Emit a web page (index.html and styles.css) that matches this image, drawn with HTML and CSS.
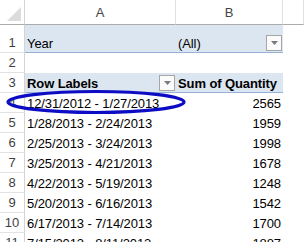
FILE: index.html
```html
<!DOCTYPE html>
<html>
<head>
<meta charset="utf-8">
<link rel="stylesheet" href="styles.css">
</head>
<body>
<div class="sheet">
  <div class="corner"><svg class="tri" width="16" height="16" viewBox="0 0 16 16"><polygon points="15,1 15,15 1,15" fill="#dcdcdc"/></svg></div>
  <div class="colhead">A</div>
  <div class="colhead">B</div>
  <div class="colhead"></div>

  <div class="rowhead">1</div>
  <div class="cell band">Year</div>
  <div class="cell band split">(All)<span class="dd"><svg width="7" height="4" viewBox="0 0 7 4"><polygon points="0,0 7,0 3.5,4" fill="#7a7a7a"/></svg></span></div>
  <div class="cell"></div>

  <div class="rowhead">2</div>
  <div class="cell"></div>
  <div class="cell"></div>
  <div class="cell"></div>

  <div class="rowhead">3</div>
  <div class="cell band bold split">Row Labels<span class="dd"><svg width="7" height="4" viewBox="0 0 7 4"><polygon points="0,0 7,0 3.5,4" fill="#7a7a7a"/></svg></span></div>
  <div class="cell band bold">Sum of Quantity</div>
  <div class="cell"></div>

  <div class="rowhead">4</div>
  <div class="cell">12/31/2012 - 1/27/2013</div>
  <div class="cell num">2565</div>
  <div class="cell"></div>

  <div class="rowhead">5</div>
  <div class="cell">1/28/2013 - 2/24/2013</div>
  <div class="cell num">1959</div>
  <div class="cell"></div>

  <div class="rowhead">6</div>
  <div class="cell">2/25/2013 - 3/24/2013</div>
  <div class="cell num">1998</div>
  <div class="cell"></div>

  <div class="rowhead">7</div>
  <div class="cell">3/25/2013 - 4/21/2013</div>
  <div class="cell num">1678</div>
  <div class="cell"></div>

  <div class="rowhead">8</div>
  <div class="cell">4/22/2013 - 5/19/2013</div>
  <div class="cell num">1248</div>
  <div class="cell"></div>

  <div class="rowhead">9</div>
  <div class="cell">5/20/2013 - 6/16/2013</div>
  <div class="cell num">1542</div>
  <div class="cell"></div>

  <div class="rowhead">10</div>
  <div class="cell">6/17/2013 - 7/14/2013</div>
  <div class="cell num">1700</div>
  <div class="cell"></div>

  <div class="rowhead">11</div>
  <div class="cell">7/15/2013 - 8/11/2013</div>
  <div class="cell num">1887</div>
  <div class="cell"></div>

  <svg class="circle" width="304" height="242" viewBox="0 0 304 242"><ellipse cx="96" cy="102" rx="88" ry="10.5" fill="none" stroke="#0c0cc4" stroke-width="3.2"/></svg>
</div>
</body>
</html>
```
FILE: styles.css
```css
html, body {
  margin: 0;
  padding: 0;
  background: #fff;
  overflow: hidden;
}
body {
  font-family: "Liberation Sans", Arial, sans-serif;
  font-size: 13px;
  color: #000;
}
.sheet {
  position: relative;
  display: grid;
  grid-template-columns: 25px 151px 107px 21px;
  grid-template-rows: 25px 28px repeat(10, 20px);
  width: 304px;
  height: 242px;
  overflow: hidden;
}
.corner {
  border-right: 1px solid #d4d4d4;
  border-bottom: 1px solid #ababab;
  display: flex;
  align-items: flex-end;
  justify-content: flex-end;
  padding: 0 2px 2px 0;
}
.colhead {
  border-right: 1px solid #e0e0e0;
  border-bottom: 1px solid #ababab;
  color: #444;
  display: flex;
  align-items: center;
  justify-content: center;
  padding-top: 1px;
}
.rowhead {
  border-right: 1px solid #d4d4d4;
  border-bottom: 1px solid #e2e2e2;
  color: #3f3f3f;
  display: flex;
  align-items: flex-end;
  justify-content: center;
  padding-bottom: 2px;
  line-height: 15px;
}
.cell {
  display: flex;
  align-items: flex-end;
  padding: 0 2px 2px 2px;
  line-height: 15px;
  white-space: nowrap;
  letter-spacing: -0.1px;
}
.band {
  background: #dce6f1;
  border-bottom: 1px solid #95b3d7;
  padding-bottom: 1px;
}
.bold {
  font-weight: bold;
}
.split {
  justify-content: space-between;
  padding-right: 1px;
}
.num {
  justify-content: flex-end;
}
.dd {
  width: 14px;
  height: 14px;
  border: 1px solid #a6a6a6;
  background: #fbfbfb;
  display: flex;
  align-items: center;
  justify-content: center;
  align-self: flex-end;
}
.circle {
  position: absolute;
  left: 0;
  top: 0;
  pointer-events: none;
}
```
